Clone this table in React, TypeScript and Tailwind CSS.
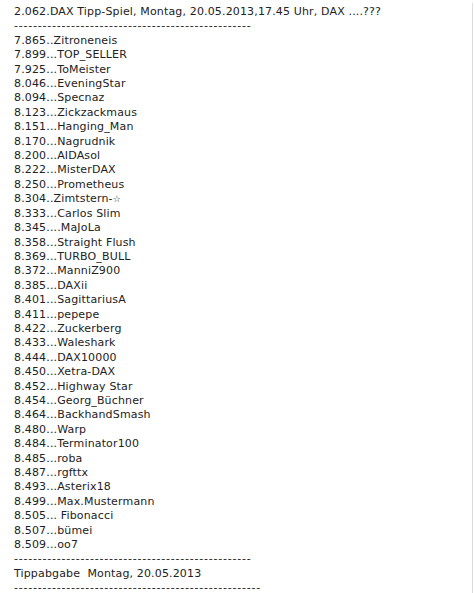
// @ts-nocheck
import React from "react";

const tipps = [
  "7.865..Zitroneneis",
  "7.899...TOP_SELLER",
  "7.925...ToMeister",
  "8.046...EveningStar",
  "8.094...Specnaz",
  "8.123...Zickzackmaus",
  "8.151...Hanging_Man",
  "8.170...Nagrudnik",
  "8.200...AIDAsol",
  "8.222...MisterDAX",
  "8.250...Prometheus",
  "8.304..Zimtstern-",
  "8.333...Carlos Slim",
  "8.345....MaJoLa",
  "8.358...Straight Flush",
  "8.369...TURBO_BULL",
  "8.372...ManniZ900",
  "8.385...DAXii",
  "8.401...SagittariusA",
  "8.411...pepepe",
  "8.422...Zuckerberg",
  "8.433...Waleshark",
  "8.444...DAX10000",
  "8.450...Xetra-DAX",
  "8.452...Highway Star",
  "8.454...Georg_Büchner",
  "8.464...BackhandSmash",
  "8.480...Warp",
  "8.484...Terminator100",
  "8.485...roba",
  "8.487...rgfttx",
  "8.493...Asterix18",
  "8.499...Max.Mustermann",
  "8.505... Fibonacci",
  "8.507...bümei",
  "8.509...oo7",
];

const Dashes = ({ n }) => (
  <div className="tracking-[0.78px]">{"-".repeat(n)}</div>
);

export default function App() {
  return (
    <div className="bg-white w-[474px] h-[593px] overflow-hidden">
      <div className="w-[473px] h-[590px] mt-[3px] border-r border-[#dcdcdc]">
        <div className="pl-[14px] pt-[2px] text-[11px] leading-[14.4px] tracking-[0.15px] text-[#222] whitespace-pre" style={{ fontFamily: "Verdana, 'DejaVu Sans', sans-serif" }}>
          <div>2.062.DAX Tipp-Spiel, Montag, 20.05.2013,17.45 Uhr, DAX ....???</div>
          <Dashes n={50} />
          {tipps.map((t, i) => (
            <div key={i}>
              {t}
              {i === 11 && <span className="text-[9px]">☆</span>}
            </div>
          ))}
          <Dashes n={50} />
          <div>Tippabgabe  Montag, 20.05.2013</div>
          <Dashes n={52} />
        </div>
      </div>
    </div>
  );
}
